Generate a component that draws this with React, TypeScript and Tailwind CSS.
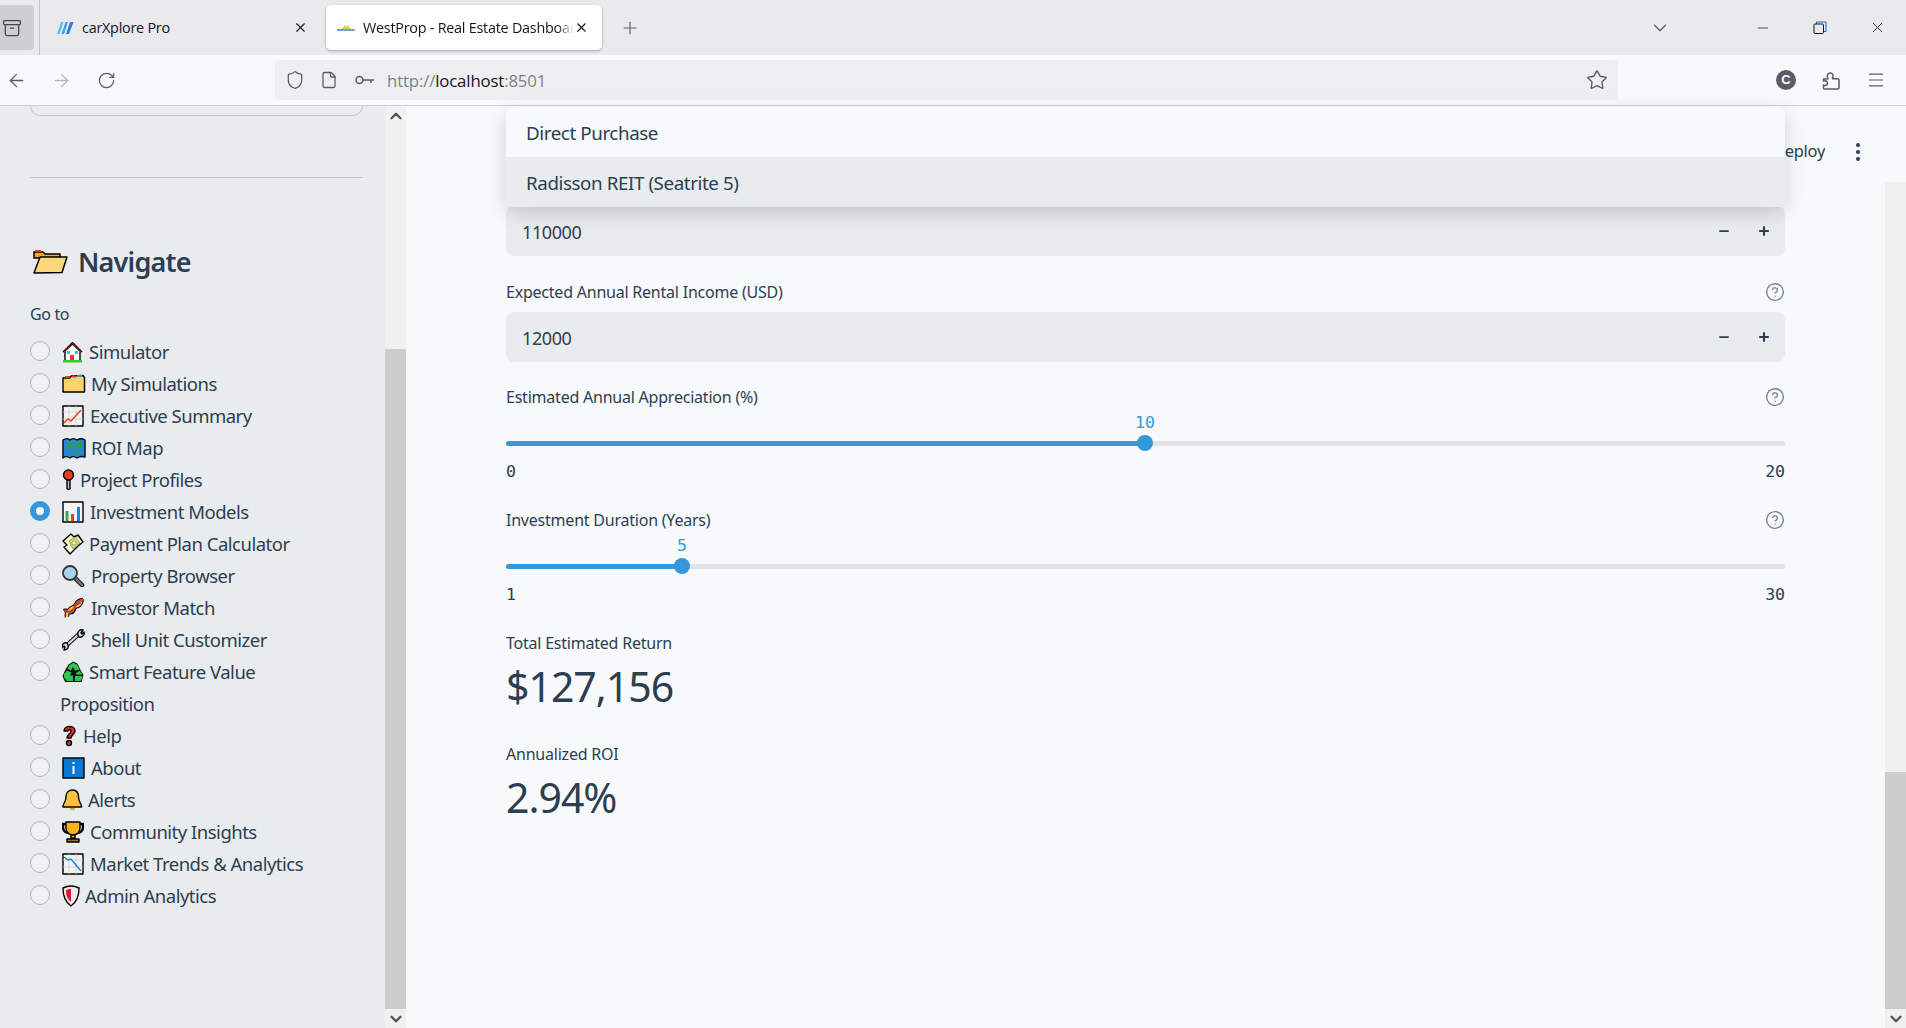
import React from "react";
import { ArrowLeft, ArrowRight, RotateCw, Shield, File, Star, ChevronDown, Minus, X, Plus, Menu, ChevronUp, HelpCircle, Archive } from "lucide-react";

const o = { stroke: "#000", strokeWidth: 1.4, strokeLinejoin: "round" as const };

const Ic = ({ w = 22, children }: { w?: number; children: React.ReactNode }) => (
  <svg width={w} height={22} viewBox={`0 0 ${w} 22`} className="shrink-0">{children}</svg>
);

const icons: Record<string, React.ReactNode> = {
  house: <Ic><path d="M1 11 10.500 1.500 20 11" fill="#f5f5f5" {...o}/><path d="M3 10v10h15V10L10.500 3Z" fill="#fff" {...o}/><path d="M1.500 11 10.500 2.200 19.500 11" fill="none" stroke="#e03" strokeWidth="1"/><rect x="8" y="14" width="4" height="6" fill="#e33"/><rect x="5" y="10" width="3" height="3" fill="#3bd"/><rect x="13" y="10" width="3" height="3" fill="#3bd"/><rect x="1" y="19" width="19" height="2.500" fill="#3c3"/></Ic>,
  folder: <Ic w={24}><path d="M1 5h7l1-2 12-.5 1.500 2V19H1Z" fill="#fbd36c" {...o}/><path d="M3 4h5M10 3.500h4" stroke="#e33" strokeWidth="2"/><path d="M15 3h5" stroke="#29c" strokeWidth="2"/></Ic>,
  up: <Ic><rect x="1" y="1" width="20" height="20" fill="#f3f3f3" {...o}/><path d="M7 1v20M14 1v20M1 7h20M1 14h20" stroke="#ccc" strokeWidth=".7"/><path d="M2 18l4-4 3 2 10-11" fill="none" stroke="#e8401c" strokeWidth="1.500"/></Ic>,
  map: <Ic w={24}><path d="M1 3c3-2 5-2 7 0 2-2 4-2 7 0 3-2 5-2 8 0v17c-3-1-5-1-8 1-3-2-5-2-7 0-3-2-5-2-7 0Z" fill="#2a86d0" {...o}/><path d="M5 6l5-1 1 5-4 3ZM14 5h6l-1 6-4-1ZM14 14l4-1 1 3-4 1Z" fill="#2f9e3a"/></Ic>,
  pin: <Ic w={13}><circle cx="6.500" cy="6" r="5" fill="#ee3d1c" {...o}/><path d="M5 11h3v8.500c0 1-3 1-3 0Z" fill="#bbb" {...o}/></Ic>,
  bars: <Ic><rect x="1" y="1" width="20" height="20" fill="#f5f5f5" {...o}/><rect x="3.500" y="10" width="3" height="10" fill="#2db34a"/><rect x="9" y="13" width="3" height="7" fill="#e8401c"/><rect x="15" y="6" width="3" height="14" fill="#1a85d6"/></Ic>,
  money: <Ic><path d="M1 8 9 1l3 3 4-2 5 7-5 4-8 8-6-7 3-2Z" fill="#fdfbd0" {...o}/><path d="M7 8l6-4 5 6-7 6Z" fill="#d5de5a" stroke="#778" strokeWidth=".7"/><circle cx="12" cy="10" r="2" fill="#f4f4b0" stroke="#778" strokeWidth=".6"/></Ic>,
  search: <Ic w={23}><path d="M13 13l7 7" stroke="#000" strokeWidth="4.500" strokeLinecap="round"/><path d="M13 13l7 7" stroke="#777" strokeWidth="2.500" strokeLinecap="round"/><circle cx="8" cy="8" r="7" fill="#a6d2f0" stroke="#333" strokeWidth="1.800"/></Ic>,
  dna: <Ic w={23}><path d="M2 14C6 12 9 19 12 12S15 4 21 3" fill="none" stroke="#000" strokeWidth="4.500"/><path d="M5 20C4 16 8 11 12 10S18 10 20 2" fill="none" stroke="#000" strokeWidth="4.500"/><path d="M5 20C4 16 8 11 12 10S18 10 20 2" fill="none" stroke="#fcc82a" strokeWidth="2.500"/><path d="M2 14C6 12 9 19 12 12S15 4 21 3" fill="none" stroke="#e53524" strokeWidth="2.500"/><path d="M16 4.500l2.500 2.500M7 14.500l1.500 2" stroke="#2a7fd6" strokeWidth="2"/></Ic>,
  wrench: <Ic w={23}><path d="M4 17 17 5" stroke="#000" strokeWidth="4"/><path d="M4 17 17 5" stroke="#ddd" strokeWidth="2.200"/><path d="M16 6c-1-3 2-6 5-5l-2 3 1 1 2-2c1 3-2 6-5 5ZM6 16c1 3-1 5-4 5l1-3-1-1-2 2c-1-3 2-6 5-5Z" fill="#ddd" {...o}/></Ic>,
  recycle: <Ic><path d="M11 .500 15.500 2.500 18 8l3.500 6-2 7H3L.500 15l3-6.500 3-5Z" fill="#111"/><path d="M7.500 4 11 1.800 15 3.500 17.500 8.500 13 9.500 11 6 9 9.500 5.500 8ZM2 13 5 9.500l4.500 2L8 14.500h3V20H5L2 16.500ZM13 20v-5h7l.2 2L18.500 20ZM14 12l4-2.300 2.200 3.800h-6Z" fill="#2bc650"/></Ic>,
  help: <Ic w={15}><path d="M2 6c0-6 11-6 11 0 0 3-4 4-4 7H5c0-4 4-4 4-7 0-2-3-2-3 0Z" fill="#e8301c" {...o}/><circle cx="7" cy="18" r="2.500" fill="#e8301c" {...o}/></Ic>,
  info: <Ic w={23}><rect x="1" y="1" width="21" height="20" fill="#0a78d7" {...o}/><rect x="10.500" y="5" width="2" height="2" fill="#fff"/><rect x="10.500" y="9" width="2" height="8" fill="#fff"/></Ic>,
  bell: <Ic w={21}><path d="M10.500 1c4 0 6 3 6 7 0 5 3 7 3 9v1H1v-1c0-2 3-4 3-9 0-4 2.500-7 6.500-7Z" fill="#fdc13d" {...o}/><path d="M8 19h5c0 3-5 3-5 0Z" fill="#e8a020"/></Ic>,
  trophy: <Ic><path d="M5 3H1v3c0 4 3 6 6 6M17 3h4v3c0 4-3 6-6 6" fill="none" stroke="#000" strokeWidth="2.500"/><path d="M4 1h14v6c0 5-4 7-7 7s-7-2-7-7Z" fill="#f9b21a" {...o}/><path d="M9 14h4v3H9Z" fill="#f9b21a" {...o}/><path d="M5 18h12v3H5Z" fill="#a86c20" {...o}/></Ic>,
  down: <Ic><rect x="1" y="1" width="20" height="20" fill="#f3f3f3" {...o}/><path d="M7 1v20M14 1v20M1 7h20M1 14h20" stroke="#ccc" strokeWidth=".7"/><path d="M2 4l4 3 3-1 10 12" fill="none" stroke="#1a85d6" strokeWidth="1.500"/></Ic>,
  shield: <Ic w={18}><path d="M9 1c3 0 6 1 8 2 0 8-2 14-8 18C3 17 1 11 1 3c2-1 5-2 8-2Z" fill="#ececec" {...o}/><path d="M9 4C7 4 5 4.500 4 5c0 5 1 9 5 12Z" fill="#e0162b"/></Ic>,
};

const navItems: { icon: string; label: React.ReactNode; box: string; active?: boolean; tall?: boolean }[] = [
  { icon: "house", label: "Simulator", box: "w-[27px]" },
  { icon: "folder", label: "My Simulations", box: "w-[29px]" },
  { icon: "up", label: "Executive Summary", box: "w-[28px]" },
  { icon: "map", label: "ROI Map", box: "w-[29px]" },
  { icon: "pin", label: "Project Profiles", box: "w-[18px]" },
  { icon: "bars", label: "Investment Models", box: "w-[28px]", active: true },
  { icon: "money", label: "Payment Plan Calculator", box: "w-[27px]" },
  { icon: "search", label: "Property Browser", box: "w-[29px]" },
  { icon: "dna", label: "Investor Match", box: "w-[29px]" },
  { icon: "wrench", label: "Shell Unit Customizer", box: "w-[29px]" },
  { icon: "recycle", label: <>Smart Feature Value<br /><span className="-ml-[2px]">Proposition</span></>, box: "w-[27px]", tall: true },
  { icon: "help", label: "Help", box: "w-[21px]" },
  { icon: "info", label: "About", box: "w-[29px]" },
  { icon: "bell", label: "Alerts", box: "w-[26px]" },
  { icon: "trophy", label: "Community Insights", box: "w-[28px]" },
  { icon: "down", label: "Market Trends & Analytics", box: "w-[28px]" },
  { icon: "shield", label: "Admin Analytics", box: "w-[23px]" },
];

function NavRow({ item }: { item: (typeof navItems)[number] }) {
  return (
    <div className={`flex ${item.tall ? "h-[64px]" : "h-[32px]"}`}>
      <div className="w-[32px] shrink-0 pt-[5px]">
        {item.active ? (
          <div className="h-[20px] w-[20px] rounded-full border-[6px] border-[#3498db] bg-[#f8f9fa]" />
        ) : (
          <div className="h-[20px] w-[20px] rounded-full border border-[#b0b5bc] bg-[#f0f2f6]" />
        )}
      </div>
      <div className="text-[18.500px] leading-[32px] tracking-[-0.5px] text-[#2c3e50]">
        <span className={`inline-flex h-[32px] items-center align-top ${item.box}`}>{icons[item.icon]}</span>
        {item.label}
      </div>
    </div>
  );
}

function NumberField({ value }: { value: string }) {
  return (
    <div className="flex h-[50px] items-center justify-between rounded-[8px] bg-[#e9ecef] pl-[16px] pr-[14px]">
      <span className="pt-[2px] text-[18px] tracking-[-0.4px] text-[#2c3e50]">{value}</span>
      <div className="flex items-center gap-[26px] text-[#2c3e50]">
        <Minus size={14} strokeWidth={3} />
        <Plus size={14} strokeWidth={3.500} />
      </div>
    </div>
  );
}

function Label({ text }: { text: string }) {
  return (
    <div className="flex h-[24px] items-center justify-between">
      <span className="text-[16px] tracking-[-0.22px] text-[#2c3e50]">{text}</span>
      <HelpCircle size={20} strokeWidth={1.700} className="text-[#7a8591]" />
    </div>
  );
}

function SliderField({ label, value, first, min, max }: { label: string; value: string; first?: boolean; min: string; max: string }) {
  const pos = first ? "left-[639px]" : "left-[176px]";
  return (
    <div className="h-[123px]">
      <Label text={label} />
      <div className="relative mt-[4px] h-[20px]">
        <span className={`absolute ${pos} -translate-x-1/2 font-['DejaVu_Sans_Mono',monospace] text-[16.500px] leading-[20px] text-[#3498db]`}>{value}</span>
      </div>
      <div className="relative mt-[2px] flex h-[16px] items-center">
        <div className="h-[5px] w-full rounded-full bg-[#e1e3e6]" />
        <div className={`absolute left-0 h-[5px] rounded-full bg-[#3498db] ${first ? "w-[639px]" : "w-[176px]"}`} />
        <div className={`absolute ${pos} h-[16px] w-[16px] -translate-x-1/2 rounded-full bg-[#3498db]`} />
      </div>
      <div className="mt-[11px] flex h-[20px] items-center justify-between font-['DejaVu_Sans_Mono',monospace] text-[16.500px] text-[#2c3e50]">
        <span>{min}</span>
        <span>{max}</span>
      </div>
    </div>
  );
}

function Metric({ label, value, first }: { label: string; value: string; first?: boolean }) {
  return (
    <div className={first ? "" : "mt-[27px]"}>
      <div className="flex h-[24px] items-center text-[16px] tracking-[-0.22px] text-[#2c3e50]">{label}</div>
      <div className="mt-[4px] flex h-[56px] items-center text-[41px] tracking-[-1px] text-[#2c3e50]">{value}</div>
    </div>
  );
}

function TabBar() {
  return (
    <div className="flex h-[55px] shrink-0 bg-[#eaeaed] font-['Open_Sans',sans-serif] text-[14.400px] tracking-[-0.25px] text-[#15141a]">
      <div className="my-[5px] flex w-[34px] items-center justify-center rounded-r-[4px] bg-[#cfcfd1]">
        <Archive size={20} strokeWidth={1.500} className="-ml-[10px] text-[#45454a]" />
      </div>
      <div className="mx-[5px] my-0 h-[55px] w-px bg-[#c4c4c8]" />
      <div className="my-[5px] flex w-[281px] items-center pl-[12px] pr-[18px]">
        <svg width="17" height="12" viewBox="0 0 17 12" className="mr-[8px]">
          <path d="M4 0h2.500L2.500 12H0Z" fill="#4cc3f0" />
          <path d="M8.500 0H11L7 12H4.500Z" fill="#3aa0e6" />
          <path d="M13 0h3.500L12 12H9Z" fill="#2a7fd6" />
        </svg>
        <span className="flex-1">carXplore Pro</span>
        <X size={15} strokeWidth={1.800} />
      </div>
      <div className="my-[5px] flex w-[276px] items-center rounded-[5px] bg-white pl-[11px] pr-[13px] shadow-[0_1px_3px_rgba(0,0,0,0.3)]">
        <svg width="18" height="10" viewBox="0 0 18 10" className="mr-[8px]">
          <path d="M5 6l3-4 1.500 2L11 2l3 4Z" fill="#f2c744" />
          <path d="M0 7h18" stroke="#3b82c4" strokeWidth="1.500" />
        </svg>
        <span className="w-[212px] overflow-hidden whitespace-nowrap [mask-image:linear-gradient(to_right,black_92%,transparent)]">WestProp - Real Estate Dashboard</span>
        <X size={15} strokeWidth={1.800} className="ml-auto" />
      </div>
      <div className="ml-[18px] flex items-center text-[#5b5b66]">
        <Plus size={20} strokeWidth={1.300} />
      </div>
      <div className="ml-auto flex items-center text-[#5b5b66]">
        <ChevronDown size={22} strokeWidth={1.300} className="mr-[84px]" />
        <Minus size={16} strokeWidth={1.100} className="mr-[42px] text-[#15141a]" />
        <svg width="14" height="14" viewBox="0 0 14 14" fill="none" className="mr-[42px]">
          <path d="M3.500 3V1H13v9.500h-2.500" stroke="#1668c0" strokeWidth="1" />
          <rect x="1" y="3" width="9.500" height="9.500" rx="1" stroke="#15141a" strokeWidth="1" />
        </svg>
        <X size={17} strokeWidth={1.200} className="mr-[20px] text-[#15141a]" />
      </div>
    </div>
  );
}

function ToolBar() {
  return (
    <div className="flex h-[51px] shrink-0 items-center border-b border-[#cfcfd8] bg-[#f9f9fb] text-[#5b5b66]">
      <ArrowLeft size={21} strokeWidth={1.500} className="ml-[6px]" />
      <ArrowRight size={21} strokeWidth={1.500} className="ml-[24px] text-[#b7b7bc]" />
      <RotateCw size={19} strokeWidth={1.600} className="ml-[25px]" />
      <div className="ml-[159px] flex h-[40px] w-[1343px] items-center rounded-[4px] bg-[#efeff1] pl-[10px] pr-[10px]">
        <Shield size={20} strokeWidth={1.500} />
        <File size={18} strokeWidth={1.700} className="ml-[15px]" />
        <svg width="20" height="10" viewBox="0 0 20 10" fill="none" stroke="currentColor" strokeWidth="1.500" className="ml-[17px]">
          <circle cx="4.500" cy="5" r="3.500" />
          <path d="M8 5h11M16 5v3" />
        </svg>
        <span className="ml-[12px] pt-[1px] font-['Open_Sans',sans-serif] text-[16.800px] tracking-[-0.15px] text-[#7f7f85]">
          http://<span className="text-[#15141a]">localhost</span>:8501
        </span>
        <Star size={22} strokeWidth={1.500} className="ml-auto" />
      </div>
      <div className="ml-[158px] flex h-[20px] w-[20px] items-center justify-center rounded-full bg-[#5b5b66] font-['Liberation_Sans',sans-serif] text-[13px] font-bold text-white">C</div>
      <svg width="20" height="20" viewBox="0 0 20 20" fill="none" stroke="currentColor" strokeWidth="1.500" strokeLinejoin="round" className="ml-[25px]">
        <path d="M2.500 9H6c1.500 0 1-1 .5-2-.8-1.500.4-4 2.700-4s3.500 2.500 2.700 4c-.4 1-.9 1.700.3 1.700H17a1 1 0 0 1 1 1V18a1 1 0 0 1-1 1H3.500a1 1 0 0 1-1-1v-3c1.500 1 4 .3 4-1.800S4 10.200 2.500 11.200Z" />
      </svg>
      <Menu size={20} strokeWidth={1.400} className="ml-[25px]" />
    </div>
  );
}

function Sidebar() {
  return (
    <aside className="w-[385px] shrink-0 bg-[#e9ecef] px-[30px]">
      <div className="h-[10px] w-[333px] rounded-b-[10px] border border-t-0 border-[#c3c8cf]" />
      <div className="mt-[61px] h-px w-[333px] bg-[#c3c8cf]" />
      <div className="mt-[62px] flex h-[44px] items-center text-[#2c3e50]">
        <svg width="35" height="26" viewBox="0 0 35 26" className="ml-[3px] mr-[10px] shrink-0">
          <path d="M1 3h9l2 2h15v4H1Z" fill="#f0a91d" stroke="#000" strokeWidth="1.500" />
          <path d="M2 2h6" stroke="#e33" strokeWidth="2" />
          <path d="M1 24 7 8h27l-5 15.500Z" fill="#fdd77a" stroke="#000" strokeWidth="1.500" strokeLinejoin="round" />
        </svg>
        <span className="text-[27px] font-semibold leading-[44px] tracking-[-0.8px]">Navigate</span>
      </div>
      <div className="mt-[18px] flex h-[24px] items-center text-[16px] tracking-[-0.37px] text-[#2c3e50]">Go to</div>
      <div className="mt-[10px]">
        {navItems.map((it, i) => (
          <NavRow key={i} item={it} />
        ))}
      </div>
    </aside>
  );
}

export default function App() {
  return (
    <div className="flex h-[1028px] w-[1906px] flex-col overflow-hidden bg-[#f8f9fb] font-['Noto_Sans',sans-serif]">
      <TabBar />
      <ToolBar />
      <div className="relative flex min-h-0 flex-1">
        <Sidebar />
        <div className="flex w-[21px] shrink-0 flex-col bg-[#f0f0f0]">
          <div className="flex h-[19px] items-center justify-center">
            <ChevronUp size={18} strokeWidth={3} className="text-[#505050]" />
          </div>
          <div className="mt-[224px] h-[660px] bg-[#cdcdcd]" />
          <div className="flex h-[19px] items-center justify-center">
            <ChevronDown size={18} strokeWidth={3} className="text-[#505050]" />
          </div>
        </div>
        <main className="w-[1479px] shrink-0 px-[100px] pt-[100px]">
          <NumberField value="110000" />
          <div className="mt-[24px]">
            <Label text="Expected Annual Rental Income (USD)" />
            <div className="mt-[8px]">
              <NumberField value="12000" />
            </div>
          </div>
          <div className="mt-[23px]">
            <SliderField first label="Estimated Annual Appreciation (%)" value="10" min="0" max="20" />
            <SliderField label="Investment Duration (Years)" value="5" min="1" max="30" />
          </div>
          <Metric first label="Total Estimated Return" value="$127,156" />
          <Metric label="Annualized ROI" value="2.94%" />
        </main>
        <div className="mt-[76px] flex w-[21px] shrink-0 flex-col bg-[#f0f0f0]">
          <div className="mt-[590px] flex-1 bg-[#cdcdcd]" />
          <div className="flex h-[19px] items-center justify-center">
            <ChevronDown size={18} strokeWidth={3} className="text-[#505050]" />
          </div>
        </div>

        <div className="absolute right-[121px] top-[1px] w-[1279px] overflow-hidden rounded-[8px] bg-[#f8f9fa] text-[18.800px] tracking-[-0.42px] text-[#2c3e50] shadow-[0_6px_20px_rgba(0,0,0,0.16)]">
          <div className="flex h-[50px] items-center pl-[20px] pt-[2px]">Direct Purchase</div>
          <div className="flex h-[50px] items-center bg-[#e9ecef] pl-[20px] pt-[2px]">Radisson REIT (Seatrite 5)</div>
        </div>
        <div className="absolute left-[1785px] top-[33px] flex h-[24px] w-[40px] items-center justify-end overflow-hidden whitespace-nowrap text-[16.500px] tracking-[-0.3px] text-[#2c3e50]">eploy</div>
        <div className="absolute left-[1856px] top-[37px] flex h-[18px] w-[4px] flex-col justify-between">
          <div className="h-[4px] w-[4px] rounded-full bg-[#2c3e50]" />
          <div className="h-[4px] w-[4px] rounded-full bg-[#2c3e50]" />
          <div className="h-[4px] w-[4px] rounded-full bg-[#2c3e50]" />
        </div>
      </div>
    </div>
  );
}
